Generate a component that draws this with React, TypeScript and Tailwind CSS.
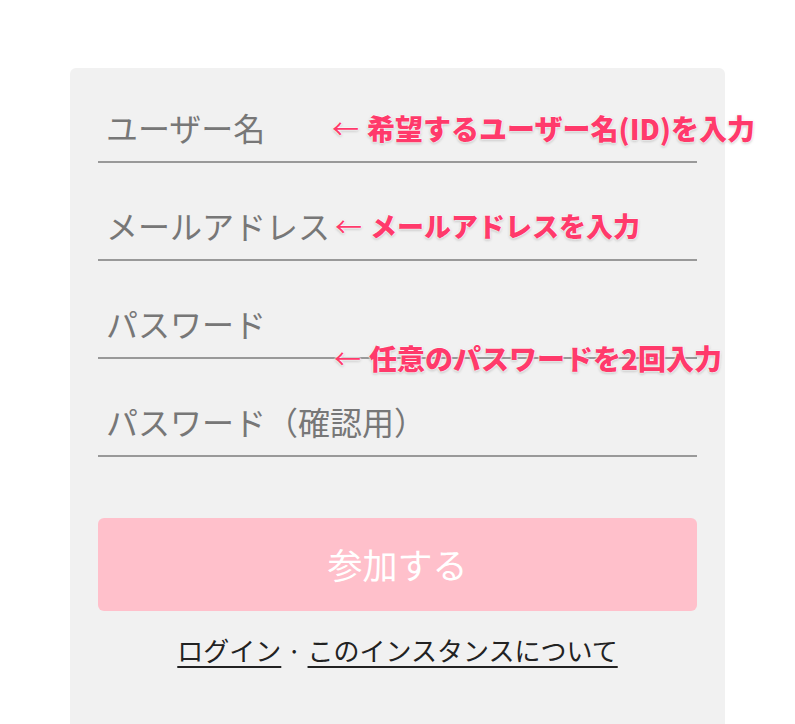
export default function App() {
  const fields = ["ユーザー名", "メールアドレス", "パスワード", "パスワード（確認用）"];

  return (
    <main
      className="h-[724px] bg-white pt-[68px] overflow-hidden"
      style={{ fontFamily: '"Noto Sans CJK JP", "Noto Sans", sans-serif' }}
    >
      <div className="relative mx-auto w-[655px] h-[656px] rounded-t-[6px] bg-[#f1f1f1] px-[28px] pt-[25px]">

        {/* FIELDS */}
        <div className="flex flex-col gap-[28px]">
          {fields.map((f) => (
            <input
              key={f}
              placeholder={f}
              className="h-[70px] w-full border-b-2 border-[#999] bg-transparent pl-[8px] text-[32px] text-[#555] outline-none placeholder:text-[#777]"
            />
          ))}
        </div>

        {/* SUBMIT */}
        <button className="mt-[61px] h-[93px] w-full rounded-[6px] bg-[#ffc0cb] text-[35px] text-white">
          参加する
        </button>

        <div className="mt-[22px] text-center text-[26px] leading-[34px] text-[#222]">
          <a className="underline underline-offset-[5px]">ログイン</a>
          <span> · </span>
          <a className="underline underline-offset-[5px]">このインスタンスについて</a>
        </div>

        {/* ANNOTATIONS */}
        <Note top={44} left={262} size={28} text="希望するユーザー名(ID)を入力" />
        <Note top={142} left={265} size={27} text="メールアドレスを入力" />
        <Note top={274} left={264} size={28} text="任意のパスワードを2回入力" />
      </div>
    </main>
  );
}

function Note({ top, left, size, text }: { top: number; left: number; size: number; text: string }) {
  return (
    <div
      className="absolute flex items-center whitespace-nowrap text-[#ff3a6b] leading-[32px] [text-shadow:0_0_2px_#fff,0_0_2px_#fff,0_0_2px_#fff,0_1px_3px_rgba(0,0,0,0.35)]"
      style={{ top, left }}
    >
      <span className="mr-[8px] text-[27px] font-normal">←</span>
      <span className="font-black" style={{ fontSize: size }}>{text}</span>
    </div>
  );
}
